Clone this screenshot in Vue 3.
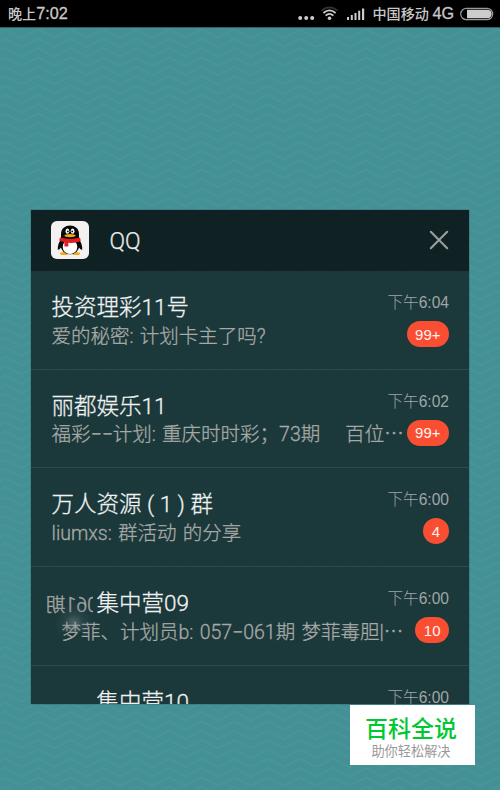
<template>
  <div class="screen">
    <svg class="waves" width="500" height="790">
      <defs>
        <pattern id="wave" x="5" y="29" width="32.8" height="9.35" patternUnits="userSpaceOnUse">
          <path d="M-16.4 -.5 L0 -9 L16.4 -.5 L32.8 -9 L49.2 -.5 M-16.4 8.85 L0 .35 L16.4 8.85 L32.8 .35 L49.2 8.85" />
        </pattern>
      </defs>
      <rect width="500" height="790" fill="url(#wave)" />
    </svg>

    <header class="status">
      <span class="clock">晚上<b>7:02</b></span>
      <div class="signals">
        <svg class="signal-icons" width="70" height="20" viewBox="0 0 70 20">
          <g fill="#ccc">
            <circle cx="2.2" cy="12" r="2" />
            <circle cx="8.2" cy="12" r="2" />
            <circle cx="14.2" cy="12" r="2" />
            <circle cx="31.5" cy="12.2" r="1.8" />
            <rect x="49" y="11" width="2" height="3" />
            <rect x="52.8" y="9" width="2" height="5" />
            <rect x="56.5" y="7" width="2" height="7" />
            <rect x="60.2" y="4.7" width="2" height="9.3" />
            <rect x="64" y="2.5" width="2.2" height="11.5" />
          </g>
          <g fill="none" stroke="#ccc" stroke-width="1.7">
            <path d="M27.6 9.6 Q31.5 6 35.4 9.6" />
            <path d="M25.4 7 Q31.5 1.8 37.6 7" />
            <path d="M23.4 4.7 Q31.5 -1.8 39.6 4.7" stroke="#333" />
          </g>
        </svg>
        <span class="carrier">中国移动 <b>4G</b></span>
        <svg class="battery" width="34" height="14" viewBox="0 0 34 14">
          <rect x=".7" y="1.3" width="32" height="11.4" rx="5.7" fill="none" stroke="#999" stroke-width="1.2" />
          <path d="M7 2.8 H27.5 A4.2 4.2 0 0 1 27.5 11.2 H7 Z" fill="#ccc" />
        </svg>
      </div>
    </header>

    <main class="panel">
      <div class="panel-head">
        <svg class="logo" width="38" height="38" viewBox="0 0 38 38">
          <rect width="38" height="38" rx="6" fill="#f4f2f0" />
          <ellipse cx="13" cy="32.4" rx="4" ry="1.5" fill="#f3a712" />
          <ellipse cx="25" cy="32.4" rx="4" ry="1.5" fill="#f3a712" />
          <path d="M10.5 18 Q6.2 23 6.8 29 Q9 28.5 11 25 Z M27.5 18 Q31.8 23 31.2 29 Q29 28.5 27 25 Z" fill="#080808" />
          <ellipse cx="19" cy="23.8" rx="9.6" ry="9.5" fill="#080808" />
          <ellipse cx="19" cy="25.8" rx="7.3" ry="7.2" fill="#fff" />
          <path d="M10 18 V13 C10 1.5 28 1.5 28 13 V18 Z" fill="#080808" />
          <ellipse cx="16.4" cy="10.2" rx="1.9" ry="2.6" fill="#fff" />
          <ellipse cx="21.6" cy="10.2" rx="1.9" ry="2.6" fill="#fff" />
          <circle cx="16.8" cy="10.4" r=".9" fill="#111" />
          <circle cx="21.2" cy="10.4" r=".9" fill="#111" />
          <ellipse cx="19" cy="14.6" rx="5.6" ry="1.7" fill="#f3a712" />
          <path d="M9 16.6 Q19 19.4 29 16.6 L29.8 20 Q24 22.5 17.3 21.7 V25.6 H13.4 V21 Q10.5 20.7 8.2 19.6 Z" fill="#e31b23" />
        </svg>
        <span class="app-name">QQ</span>
        <svg class="close" width="20" height="20" viewBox="0 0 20 20">
          <path d="M1.8 1.8 L18.2 18.2 M18.2 1.8 L1.8 18.2" />
        </svg>
      </div>

      <div v-for="(item, i) in items" :key="i" class="item">
        <div class="line">
          <span class="title" :class="{ indent: item.indent }">{{ item.title }}</span>
          <span class="time">下午{{ item.time }}</span>
        </div>
        <div class="line second">
          <span class="message" :class="{ indent: item.indent }">{{ item.message }}</span>
          <span v-if="item.count" class="badge" :class="{ round: item.count.length === 1 }">{{ item.count }}</span>
        </div>
        <template v-if="item.smudge">
          <span class="mirrored">061期</span>
          <span class="smudge"></span>
        </template>
      </div>
    </main>

    <aside class="stamp">
      <strong>百科全说</strong>
      <span>助你轻松解决</span>
    </aside>
  </div>
</template>

<script setup>
const items = [
  { title: '投资理彩11号', message: '爱的秘密: 计划卡主了吗?', time: '6:04', count: '99+' },
  { title: '丽都娱乐11', message: '福彩−−计划: 重庆时时彩；73期\u00a0\u00a0\u00a0 百位⋯', time: '6:02', count: '99+' },
  { title: '万人资源 ( 1 ) 群', message: 'liumxs: 群活动 的分享', time: '6:00', count: '4' },
  { title: '集中营09', message: '梦菲、计划员b: 057−061期 梦菲毒胆|⋯', time: '6:00', count: '10', indent: true, smudge: true },
  { title: '集中营10', message: '', time: '6:00', count: '', indent: true }
]
</script>

<style scoped>
.screen {
  position: relative;
  width: 500px;
  height: 790px;
  overflow: hidden;
  background: #449195;
  font-family: Roboto, "Noto Sans CJK SC", sans-serif;
  white-space: nowrap;
}

.waves {
  position: absolute;
  top: 0;
  left: 0;
}

.waves path {
  fill: none;
  stroke: #4b9699;
  stroke-width: 1.1;
}

.status {
  position: relative;
  display: flex;
  align-items: center;
  justify-content: space-between;
  height: 27px;
  padding: 0 6px 0 8px;
  background: #000;
  border-bottom: 1px solid #2b6264;
  color: #c8c8c8;
  font-size: 14.1px;
  font-weight: 500;
  line-height: 27px;
}

.status b {
  font-family: "Liberation Sans", sans-serif;
  font-size: 16.2px;
  font-weight: 400;
  -webkit-text-stroke: 0.3px #c8c8c8;
}

.signals {
  display: flex;
  align-items: center;
}

.signal-icons {
  margin-top: 5px;
  margin-right: 5px;
}

.carrier {
  margin-right: 6px;
}

.panel {
  position: relative;
  width: 438px;
  height: 494px;
  margin: 182px 0 0 31px;
  overflow: hidden;
  background: rgba(17, 34, 35, 0.8);
  box-shadow: 0 0 1px #173d40;
}

.panel-head {
  display: flex;
  align-items: center;
  box-sizing: border-box;
  height: 61px;
  padding: 0 20px 1px;
  background: rgba(5, 14, 16, 0.52);
}

.app-name {
  flex: 1;
  margin: 3px 0 0 20.5px;
  color: #e8eaea;
  font-size: 23px;
  font-weight: 300;
  -webkit-text-stroke: 0.25px #e8eaea;
}

.close path {
  stroke: #98a0a0;
  stroke-width: 2.1;
  stroke-linecap: round;
}

.item {
  position: relative;
  box-sizing: border-box;
  height: 98.7px;
  padding: 20px 20px 0 20.5px;
  border-bottom: 1px solid #2f4a4c;
}

.line {
  display: flex;
  align-items: center;
  justify-content: space-between;
  height: 32px;
}

.second {
  height: 26px;
  margin-top: -2px;
}

.title {
  color: #f0f2f2;
  font-size: 22.5px;
  font-weight: 300;
  line-height: 32px;
  -webkit-text-stroke: 0.3px #f0f2f2;
}

.title.indent {
  margin-left: 45px;
}

.message {
  flex: 1;
  min-width: 0;
  padding-top: 5px;
  color: #a6a9a7;
  font-size: 19.5px;
  font-weight: 300;
  line-height: 26px;
  word-spacing: 1.5px;
  -webkit-text-stroke: 0.3px #a6a9a7;
}

.message.indent {
  margin-left: 10px;
}

.time {
  margin-bottom: 8px;
  color: #a0a6a6;
  font-family: "Liberation Sans", "Noto Sans CJK SC", sans-serif;
  font-size: 15.6px;
  font-weight: 300;
  line-height: 22px;
}

.badge {
  display: flex;
  align-items: center;
  justify-content: center;
  box-sizing: border-box;
  height: 26px;
  padding: 0 8.5px;
  border-radius: 13px;
  background: #fa4e33;
  color: #fff2ee;
  font-family: "Liberation Sans", sans-serif;
  font-size: 15px;
}

.badge.round {
  width: 26px;
  padding: 0;
}

.mirrored {
  position: absolute;
  top: 26px;
  left: 15px;
  color: #a3a6a4;
  font-size: 19.5px;
  font-weight: 300;
  line-height: 26px;
  transform: scaleX(-1);
  clip-path: inset(0 0 0 5px);
  -webkit-text-stroke: 0.4px #a3a6a4;
}

.smudge {
  position: absolute;
  top: 33px;
  left: 20px;
  width: 46px;
  height: 32px;
  background: radial-gradient(ellipse at 50% 72%, rgba(150, 165, 165, 0.42) 0%, rgba(80, 105, 107, 0.22) 30%, transparent 60%);
}

.stamp {
  position: absolute;
  right: 25px;
  bottom: 25px;
  display: flex;
  flex-direction: column;
  align-items: center;
  box-sizing: border-box;
  width: 125px;
  height: 60px;
  padding: 10px 3px 0 0;
  background: #fff;
}

.stamp strong {
  color: #00c832;
  font-size: 23px;
  font-weight: 500;
  line-height: 29px;
}

.stamp span {
  color: #999;
  font-size: 13.2px;
  line-height: 15px;
}
</style>
